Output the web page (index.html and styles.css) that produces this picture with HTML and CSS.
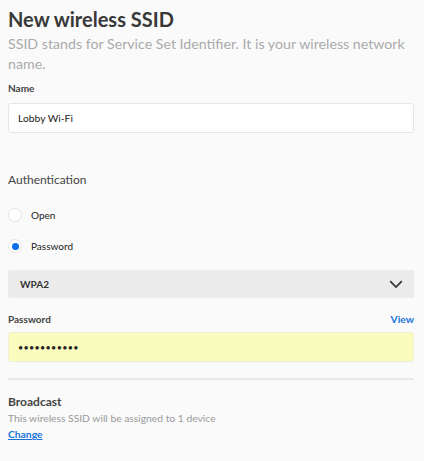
FILE: index.html
```html
<!DOCTYPE html>
<html lang="en">
<head>
    <meta charset="UTF-8">
    <title>New wireless SSID</title>
    <link rel="stylesheet" href="styles.css">
</head>
<body>
    <div class="panel">
        <h1 class="title">New wireless SSID</h1>
        <p class="intro">SSID stands for Service Set Identifier. It is your wireless network name.</p>

        <div class="field">
            <label class="label" for="name">Name</label>
            <input class="input" id="name" type="text" value="Lobby Wi-Fi">
        </div>

        <div class="auth">
            <div class="section-title">Authentication</div>
            <label class="radio"><span class="dot"></span>Open</label>
            <label class="radio checked"><span class="dot"></span>Password</label>

            <div class="select">
                <span>WPA2</span>
                <svg width="14" height="9" viewBox="0 0 14 9"><path d="M1.2 1.2 L7 7 L12.8 1.2" fill="none" stroke="#333" stroke-width="1.7"/></svg>
            </div>

            <div class="label-row">
                <span class="label">Password</span>
                <a class="link" href="#">View</a>
            </div>
            <input class="input pass" type="password" value="lobbywifi12">
        </div>

        <div class="broadcast">
            <div class="section-title bold">Broadcast</div>
            <div class="muted">This wireless SSID will be assigned to 1 device</div>
            <a class="link under" href="#">Change</a>
        </div>
    </div>
</body>
</html>
```

FILE: styles.css
```css
body, h1, p{ margin: 0; padding: 0; }
body{
    background: #fafafa;
    font-family: Lato, "Open Sans", sans-serif;
    color: #333;
}

.panel{
    padding: 6px 10px 0 8px;
}

.title{
    font-size: 20px;
    font-weight: bold;
    line-height: 26px;
    color: #383838;
}

.intro{
    margin-top: 2px;
    margin-right: -6px;
    font-size: 14.2px;
    line-height: 20px;
    color: #aaa;
}

.field{
    margin-top: 7px;
}

.label{
    display: block;
    font-size: 10px;
    font-weight: bold;
    color: #444;
    line-height: 14px;
}

.input{
    display: block;
    box-sizing: border-box;
    width: 100%;
    height: 30px;
    margin-top: 8px;
    padding: 0 9px;
    font-family: Lato, sans-serif;
    font-size: 10.3px;
    color: #222;
    background: #fff;
    border: 1px solid #e6e6e6;
    border-radius: 3px;
    outline: none;
}

.auth{
    margin-top: 39px;
}

.section-title{
    font-size: 12px;
    color: #444;
    line-height: 16px;
}

.section-title.bold{
    font-weight: bold;
}

.radio{
    display: flex;
    align-items: center;
    gap: 9px;
    font-size: 10px;
    color: #222;
    height: 16px;
    margin-top: 15px;
}

.auth .section-title + .radio{
    margin-top: 19px;
}

.dot{
    width: 12px;
    height: 12px;
    border: 1px solid #e4e4e4;
    border-radius: 50%;
    background: #fff;
    box-sizing: content-box;
    position: relative;
}

.radio.checked .dot::after{
    content: '';
    position: absolute;
    left: 3px;
    top: 3px;
    width: 7px;
    height: 7px;
    border-radius: 50%;
    background: #0a6fe6;
}

.select{
    display: flex;
    justify-content: space-between;
    align-items: center;
    height: 28px;
    margin-top: 16px;
    padding: 0 11px 0 12px;
    background: #ebebeb;
    border-radius: 3px;
    font-size: 10px;
    font-weight: bold;
    color: #333;
}

.label-row{
    display: flex;
    justify-content: space-between;
    align-items: center;
    margin-top: 14px;
}

.link{
    font-size: 10.3px;
    font-weight: bold;
    color: #1a73d9;
    text-decoration: none;
}

.link.under{
    text-decoration: underline;
}

.pass{
    background: #fafcbd;
    border-color: #eeeed8;
    font-size: 9px;
    letter-spacing: 0.3px;
    padding-left: 9px;
    margin-top: 6px;
}

.broadcast{
    margin-top: 16px;
    padding-top: 14px;
    border-top: 2px solid #e8e8e8;
}

.muted{
    font-size: 10.3px;
    color: #999;
    margin-top: 1px;
    line-height: 14px;
}

.broadcast .link{
    display: block;
    width: max-content;
    line-height: 14px;
    margin-top: 2px;
}
```
